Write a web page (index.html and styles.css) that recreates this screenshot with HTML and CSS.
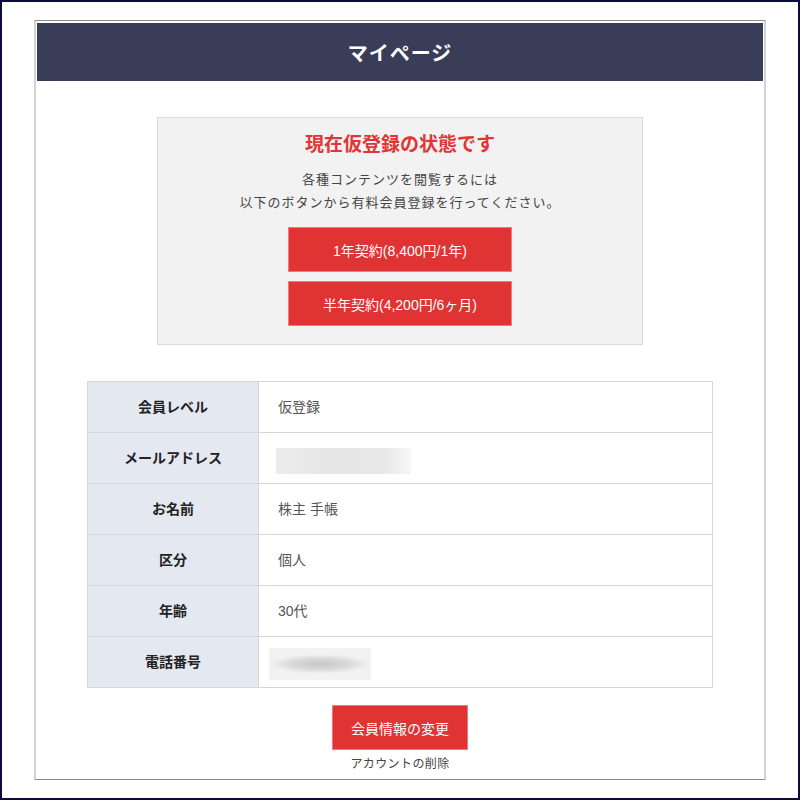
FILE: index.html
```html
<!DOCTYPE html>
<html lang="ja">
<head>
<meta charset="utf-8">
<title>マイページ</title>
<link rel="stylesheet" href="styles.css">
</head>
<body>
<div class="frame">
  <div class="box">
    <h1 class="page-title">マイページ</h1>
    <section class="notice">
      <h2 class="notice-title">現在仮登録の状態です</h2>
      <p class="notice-text">各種コンテンツを閲覧するには<br>以下のボタンから有料会員登録を行ってください。</p>
      <a class="btn btn-plan">1年契約(8,400円/1年)</a>
      <a class="btn btn-plan">半年契約(4,200円/6ヶ月)</a>
    </section>
    <table class="info">
      <tr><th>会員レベル</th><td>仮登録</td></tr>
      <tr><th>メールアドレス</th><td class="td-mail"><span class="blur blur-mail"></span></td></tr>
      <tr><th>お名前</th><td>株主 手帳</td></tr>
      <tr><th>区分</th><td>個人</td></tr>
      <tr><th>年齢</th><td>30代</td></tr>
      <tr><th>電話番号</th><td class="td-phone"><span class="blur blur-phone"></span></td></tr>
    </table>
    <div class="actions">
      <a class="btn btn-edit">会員情報の変更</a>
      <a class="delete-link">アカウントの削除</a>
    </div>
  </div>
</div>
</body>
</html>
```
FILE: styles.css
```css
html, body {
  margin: 0;
  padding: 0;
  background: #fff;
}
body {
  font-family: "Liberation Sans", "Noto Sans CJK JP", sans-serif;
  color: #444;
}
.frame {
  width: 800px;
  height: 800px;
  box-sizing: border-box;
  border: 2px solid #0b0d3c;
  padding: 18px 32px 0 32px;
}
.box {
  height: 760px;
  box-sizing: border-box;
  border-top: 1px solid #8a8a8a;
  border-bottom: 1px solid #8a8a8a;
  border-left: 2px solid #d3d3d3;
  border-right: 2px solid #d3d3d3;
  padding: 2px 1px 0 1px;
  display: flex;
  flex-direction: column;
  align-items: center;
}
.page-title {
  align-self: stretch;
  margin: 0;
  height: 58px;
  background: #3a3d57;
  color: #fff;
  font-size: 20px;
  font-weight: bold;
  letter-spacing: 1px;
  display: flex;
  align-items: center;
  justify-content: center;
}
.notice {
  margin-top: 36px;
  width: 486px;
  height: 228px;
  box-sizing: border-box;
  background: #f2f2f2;
  border: 1px solid #dcdcdc;
  padding-top: 13px;
  display: flex;
  flex-direction: column;
  align-items: center;
}
.notice-title {
  margin: 0;
  font-size: 19px;
  line-height: 28px;
  font-weight: bold;
  color: #e03636;
}
.notice-text {
  margin: 9px 0 0 0;
  font-size: 13px;
  letter-spacing: 1px;
  line-height: 23px;
  text-align: center;
  color: #444;
}
.btn {
  display: flex;
  align-items: center;
  justify-content: center;
  box-sizing: border-box;
  background: #e03334;
  border: 1px solid #ec7b7b;
  color: #fff;
  font-size: 14px;
  text-decoration: none;
}
.btn-plan {
  width: 224px;
  height: 45px;
  margin-top: 9px;
}
.notice-text + .btn-plan {
  margin-top: 13px;
}
.info {
  margin-top: 36px;
  width: 626px;
  border-collapse: collapse;
  font-size: 14px;
}
.info th, .info td {
  border: 1px solid #d6d6d6;
  height: 47px;
  padding: 0 0 3px 0;
}
.info th {
  width: 170px;
  background: #e4e8f0;
  color: #222;
  font-weight: bold;
  text-align: center;
}
.info td {
  padding-left: 19px;
  color: #555;
  text-align: left;
}
.info td.td-mail {
  padding-left: 17px;
}
.info td.td-phone {
  padding-left: 10px;
}
.blur {
  display: block;
}
.blur-mail {
  width: 135px;
  height: 26px;
  margin-top: 8px;
  background: linear-gradient(90deg, #ececec 0%, #e6e6e6 40%, #e8e8e8 80%, #f6f6f6 100%);
}
.blur-phone {
  width: 102px;
  height: 32px;
  margin-top: 6px;
  background: radial-gradient(ellipse 50% 30% at 50% 50%, #c8c8c8 0%, #d8d8d8 55%, #f2f2f2 100%);
}
.actions {
  margin-top: 17px;
  display: flex;
  flex-direction: column;
  align-items: center;
}
.btn-edit {
  width: 136px;
  height: 45px;
}
.delete-link {
  margin-top: 6px;
  font-size: 12px;
  letter-spacing: 0.4px;
  line-height: 16px;
  color: #444;
}
```
